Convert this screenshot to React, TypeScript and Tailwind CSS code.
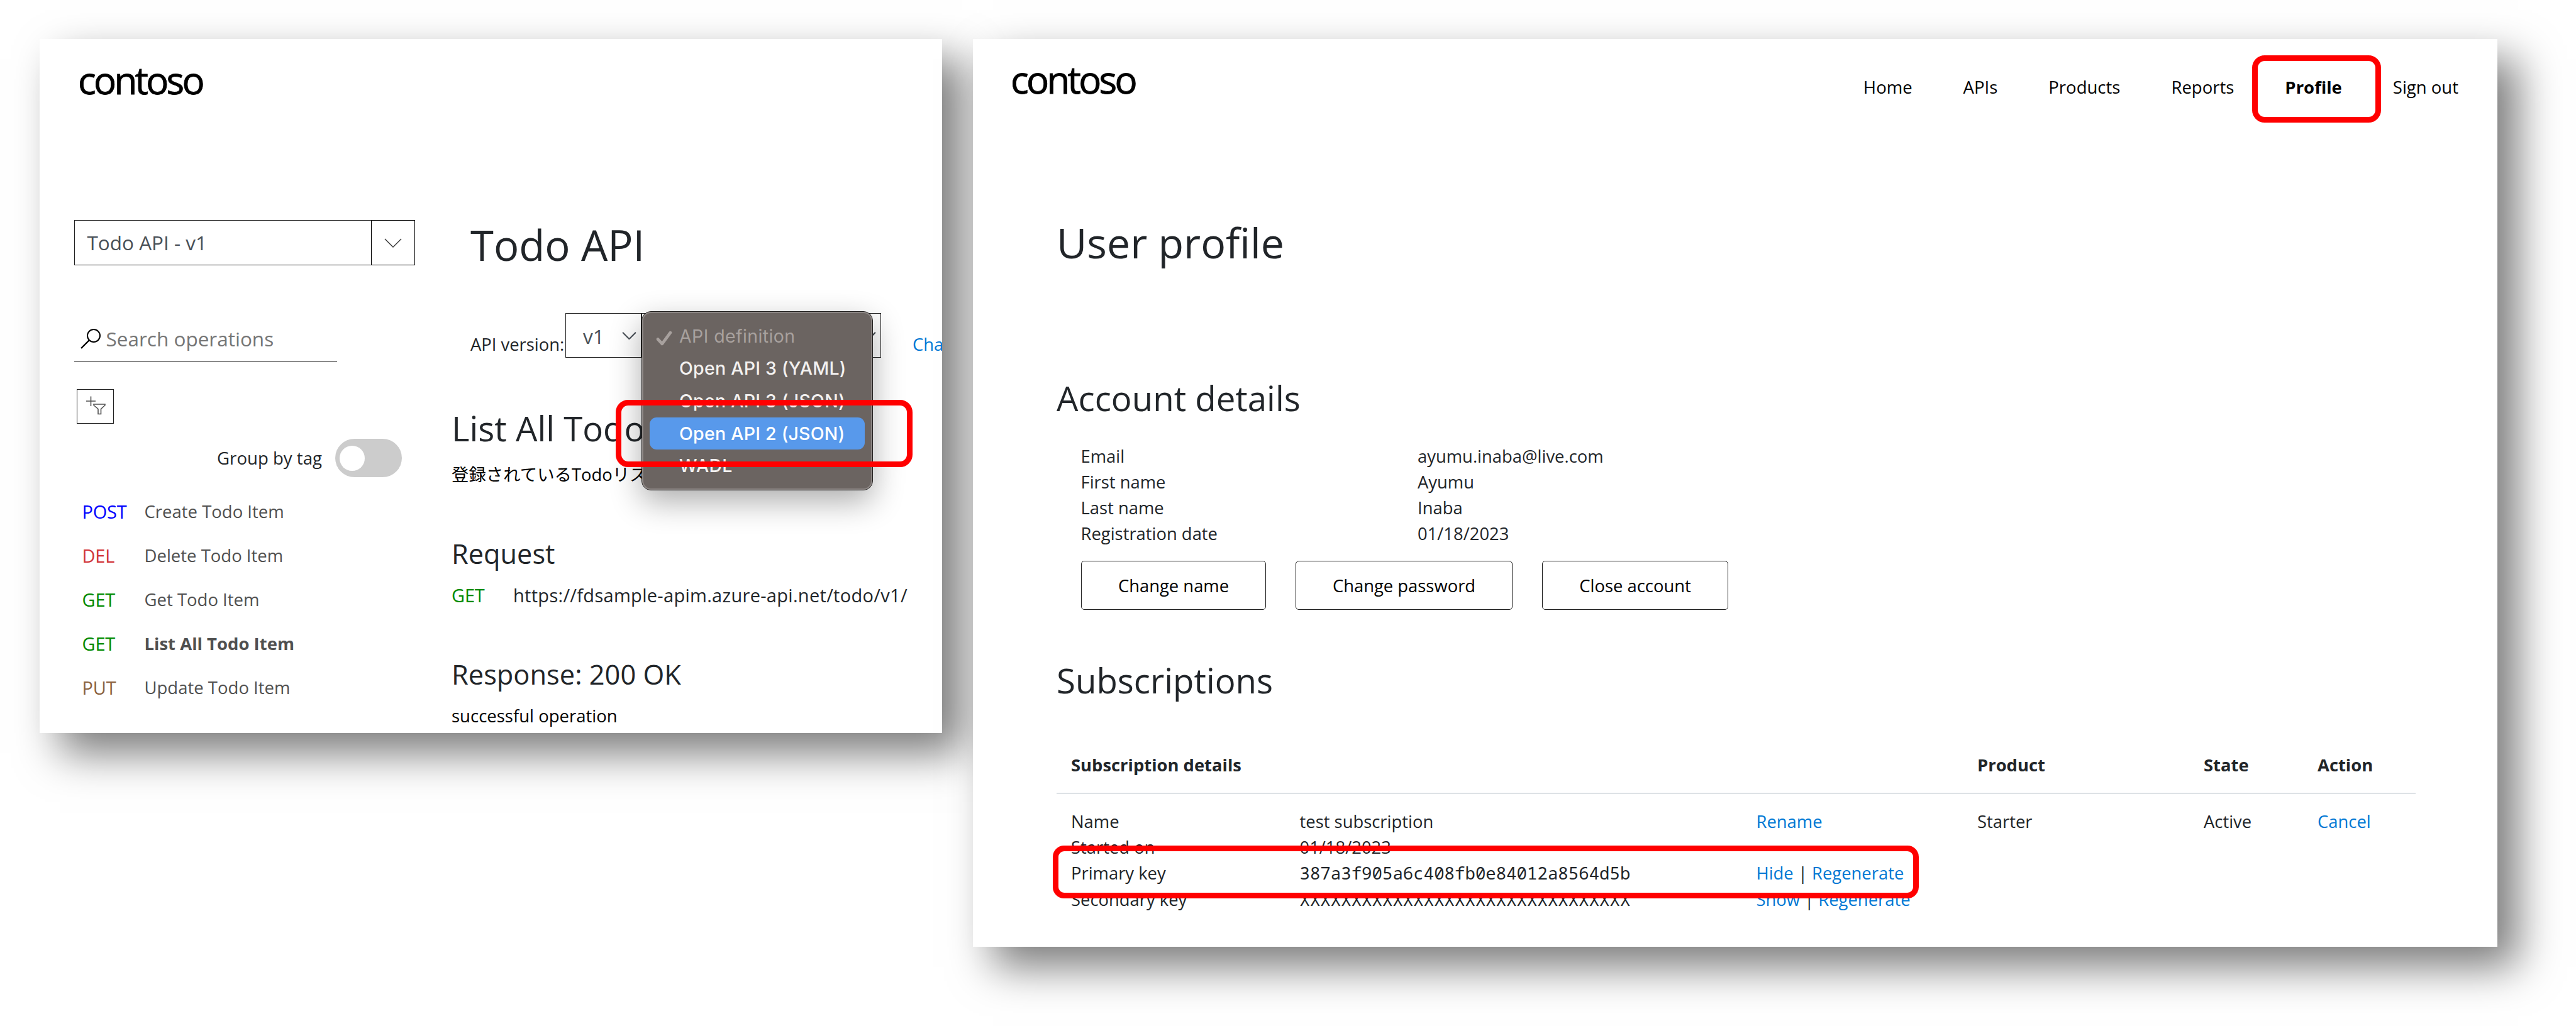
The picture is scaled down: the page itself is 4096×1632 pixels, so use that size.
import React from "react";

const operations = [
  { method: "POST", color: "text-[#0000ff]", name: "Create Todo Item" },
  { method: "DEL", color: "text-[#d13438]", name: "Delete Todo Item" },
  { method: "GET", color: "text-[#008a00]", name: "Get Todo Item" },
  { method: "GET", color: "text-[#008a00]", name: "List All Todo Item", active: true },
  { method: "PUT", color: "text-[#8b6340]", name: "Update Todo Item" },
];

const account = [
  ["Email", "ayumu.inaba@live.com"],
  ["First name", "Ayumu"],
  ["Last name", "Inaba"],
  ["Registration date", "01/18/2023"],
];

const accountActions = [
  { label: "Change name", width: "w-[294px]" },
  { label: "Change password", width: "w-[345px]" },
  { label: "Close account", width: "w-[296px]" },
];

const nav = ["Home", "APIs", "Products", "Reports", "Profile", "Sign out"];

function Logo() {
  return (
    <div className="text-[60px] leading-[60px] font-medium tracking-[-3.7px] text-black [-webkit-text-stroke:0.8px_black]">contoso</div>
  );
}

function Marker({ className }: { className: string }) {
  return <div className={`absolute border-[9px] border-[#ff0000] ${className}`} />;
}

function Chevron({ className, stroke }: { className: string; stroke: number }) {
  return (
    <svg className={className} viewBox="0 0 28 15" fill="none" stroke="currentColor" strokeWidth={stroke}>
      <path d="M1 1 L14 14 L27 1" />
    </svg>
  );
}

function DefinitionMenu() {
  return (
    <div className="absolute left-[957px] top-[433px] h-[285px] w-[368px] rounded-[15px] border border-[#1f1d1c] bg-[#6b6461] font-['Inter'] text-[28.5px] leading-[52px] font-medium tracking-[0.25px] text-[#f3f1f0] shadow-[0_18px_50px_rgba(0,0,0,0.32)]">
      <div className="flex h-full flex-col rounded-[14px] border-2 border-[#8c8684] px-[10px] pt-[10.500px]">
        <div className="relative h-[51.7px] pl-[47px] font-normal tracking-[0.4px] text-[#a8a19e]">
          <svg className="absolute left-[10px] top-[17px] h-[24px] w-[26px]" viewBox="0 0 25 23" fill="none" stroke="currentColor" strokeWidth="4.6" strokeLinecap="round" strokeLinejoin="round">
            <path d="M3 13 L9.5 20 L22 3" />
          </svg>
          API definition
        </div>
        <div className="h-[51.7px] pl-[47px]">Open API 3 (YAML)</div>
        <div className="h-[51.7px] pl-[47px]">Open API 3 (JSON)</div>
        <div className="h-[51.7px] rounded-[11px] bg-[#5899eb] pl-[47px] text-white">Open API 2 (JSON)</div>
        <div className="h-[51.7px] pl-[47px]">WADL</div>
      </div>
    </div>
  );
}

function Sidebar() {
  return (
    <aside className="flex w-[542px] flex-none flex-col">
      <div className="flex h-[72px] text-[31.5px] text-[#495057]">
        <div className="flex flex-1 items-center border border-r-0 border-[#202020] pl-[20px]">Todo API - v1</div>
        <div className="flex w-[70px] items-center justify-center border border-black">
          <Chevron className="h-[15px] w-[28px] text-[#333]" stroke={1.4} />
        </div>
      </div>

      <div className="mt-[87px] flex h-[67px] w-[418px] border-b border-[#202020] text-[31.5px] leading-[60px] text-[#757575]">
        <svg className="ml-[10px] mt-[14px] h-[32px] w-[32px] flex-none" viewBox="0 0 32 32" fill="none" stroke="#000" strokeWidth="2">
          <circle cx="21" cy="11" r="10" />
          <path d="M14 18 L1 31" strokeWidth="2.4" />
        </svg>
        <span className="ml-[9px]">Search operations</span>
      </div>

      <div className="ml-[4px] mt-[43px] h-[55px] w-[59px] border border-[#202020]">
        <svg className="h-full w-full" viewBox="0 0 57 53" fill="none" stroke="#505050" strokeWidth="1.6">
          <path d="M21.5 10.500 V26 M14 18 H29" />
          <path d="M26 23 H44 V24.500 L37.500 30.500 V38.500 H33 V30.500 L26 24.500 Z" />
        </svg>
      </div>

      <div className="mr-[20.500px] mt-[24px] flex h-[61px] items-center justify-end gap-[21px] text-[27.6px] text-[#212529]">
        Group by tag
        <div className="flex h-[61px] w-[106px] items-center rounded-full bg-[#cccccc] pl-[7px]">
          <div className="h-[40px] w-[40px] rounded-full bg-white" />
        </div>
      </div>

      <ul className="mt-[19.500px] pl-[13px]">
        {operations.map((op) => (
          <li key={op.name} className="flex h-[70px] items-center text-[27.5px] text-[#505050]">
            <span className={`w-[99px] text-[29px] tracking-[-0.2px] ${op.color}`}>{op.method}</span>
            <span className={op.active ? "font-bold" : ""}>{op.name}</span>
          </li>
        ))}
      </ul>
    </aside>
  );
}

function ApiWindow() {
  return (
    <section className="relative h-[1104px] w-[1435px] flex-none overflow-hidden bg-white shadow-[32px_32px_64px_rgba(0,0,0,0.52)]">
      <header className="h-[288px] pl-[61px] pt-[35px]">
        <Logo />
      </header>
      <div className="flex pl-[54.500px]">
        <Sidebar />
        <main className="ml-[58.500px] w-[800px] flex-none whitespace-nowrap text-[27.4px] leading-[41px] text-[#212529]">
          <h1 className="-mt-[1px] pl-[30px] text-[67px] leading-[80px]">Todo API</h1>
          <div className="mt-[69px] flex h-[71px] items-start pl-[30px]">
            <span className="mt-[29px] w-[151px] flex-none">API version:</span>
            <div className="flex h-[71px] w-[121px] flex-none items-center justify-between border border-[#202020] pl-[27px] pr-[7px] text-[31.5px] text-[#495057]">
              <span className="mt-[2px]">v1</span>
              <Chevron className="h-[12px] w-[23px]" stroke={2.6} />
            </div>
            <div className="flex h-[71px] w-[380.500px] flex-none items-center justify-end border border-[#202020] pr-[7px] text-[#343a40]">
              <Chevron className="h-[12px] w-[23px]" stroke={2.6} />
            </div>
            <a className="ml-[50.500px] mt-[29px] flex-none text-[#0078d4]">Cha</a>
          </div>
          <h2 className="mt-[78.5px] text-[54.6px] leading-[66px]">List All Todo</h2>
          <p className="mt-[20px] font-['Open_Sans','Noto_Sans_CJK_JP',sans-serif] text-black">登録されているTodoリス</p>
          <h3 className="mt-[80px] text-[43.3px] leading-[52px]">Request</h3>
          <div className="mt-[19px] flex">
            <span className="w-[98px] text-[29px] tracking-[-0.2px] text-[#008a00]">GET</span>
            <span className="text-[29px] tracking-[0.3px]">https://fdsample-apim.azure-api.net/todo/v1/</span>
          </div>
          <h3 className="mt-[80px] text-[43.4px] leading-[52px]">Response: 200 OK</h3>
          <p className="mt-[19.500px] text-[27.500px] text-black">successful operation</p>
        </main>
      </div>
      <DefinitionMenu />
      <Marker className="left-[916px] top-[574px] h-[107px] w-[472px] rounded-[20px]" />
    </section>
  );
}

function ProfileWindow() {
  return (
    <section className="relative ml-[49px] h-[1444px] w-[2424px] flex-none bg-white pl-[133px] text-[27.4px] leading-[41px] text-[#212529] shadow-[32px_32px_64px_rgba(0,0,0,0.52)]">
      <header className="-ml-[73px] flex h-[283px] items-start justify-between pr-[62px]">
        <div className="pt-[34px]">
          <Logo />
        </div>
        <nav className="flex gap-[81px] pt-[56px] text-[27.5px] text-black">
          {nav.map((item) => (
            <a key={item} className={item === "Profile" ? "font-bold" : ""}>
              {item}
            </a>
          ))}
        </nav>
      </header>

      <h1 className="text-[66.300px] leading-[80px]">User profile</h1>

      <h2 className="mt-[175px] text-[54.6px] leading-[66px]">Account details</h2>
      <dl className="mt-[38.500px] pl-[38.500px]">
        {account.map(([label, value]) => (
          <div key={label} className="flex h-[41.1px]">
            <dt className="w-[535.500px]">{label}</dt>
            <dd>{value}</dd>
          </div>
        ))}
      </dl>
      <div className="mt-[23px] flex gap-[47px] pl-[39px]">
        {accountActions.map((b) => (
          <button key={b.label} className={`h-[78.5px] rounded-[5px] border border-[#202020] text-black ${b.width}`}>
            {b.label}
          </button>
        ))}
      </div>

      <h2 className="mt-[78.500px] text-[54.6px] leading-[66px]">Subscriptions</h2>
      <div className="mt-[81px] flex h-[67.5px] w-[2161px] border-b-2 border-[#dee2e6] pl-[23px] font-bold">
        <span className="w-[1441px]">Subscription details</span>
        <span className="w-[360px]">Product</span>
        <span className="w-[181px]">State</span>
        <span>Action</span>
      </div>
      <div className="mt-[22.500px] flex pl-[23px]">
        <div className="w-[363.500px]">
          <div>Name</div>
          <div>Started on</div>
          <div>Primary key</div>
          <div className="mt-[1.500px]">Secondary key</div>
        </div>
        <div className="w-[726px]">
          <div>test subscription</div>
          <div>01/18/2023</div>
          <div className="font-['Noto_Sans_Mono','DejaVu_Sans_Mono',monospace]">387a3f905a6c408fb0e84012a8564d5b</div>
          <div className="mt-[1.500px] font-['Noto_Sans_Mono','DejaVu_Sans_Mono',monospace]">XXXXXXXXXXXXXXXXXXXXXXXXXXXXXXXX</div>
        </div>
        <div className="w-[351.500px] text-[#0078d4]">
          <div>Rename</div>
          <div className="mt-[41px]">
            Hide <span className="text-[#212529]">|</span> Regenerate
          </div>
          <div className="mt-[1.500px]">
            Show <span className="text-[#212529]">|</span> Regenerate
          </div>
        </div>
        <span className="w-[360px]">Starter</span>
        <span className="w-[181px]">Active</span>
        <a className="text-[#0078d4]">Cancel</a>
      </div>

      <Marker className="left-[2034px] top-[26px] h-[107px] w-[205px] rounded-[20px]" />
      <Marker className="left-[127px] top-[1283px] h-[84px] w-[1377px] rounded-[18px]" />
    </section>
  );
}

export default function App() {
  return (
    <div className="flex h-[1632px] w-[4096px] items-start overflow-hidden bg-white pl-[63px] pt-[62px] font-['Open_Sans',sans-serif]">
      <ApiWindow />
      <ProfileWindow />
    </div>
  );
}
